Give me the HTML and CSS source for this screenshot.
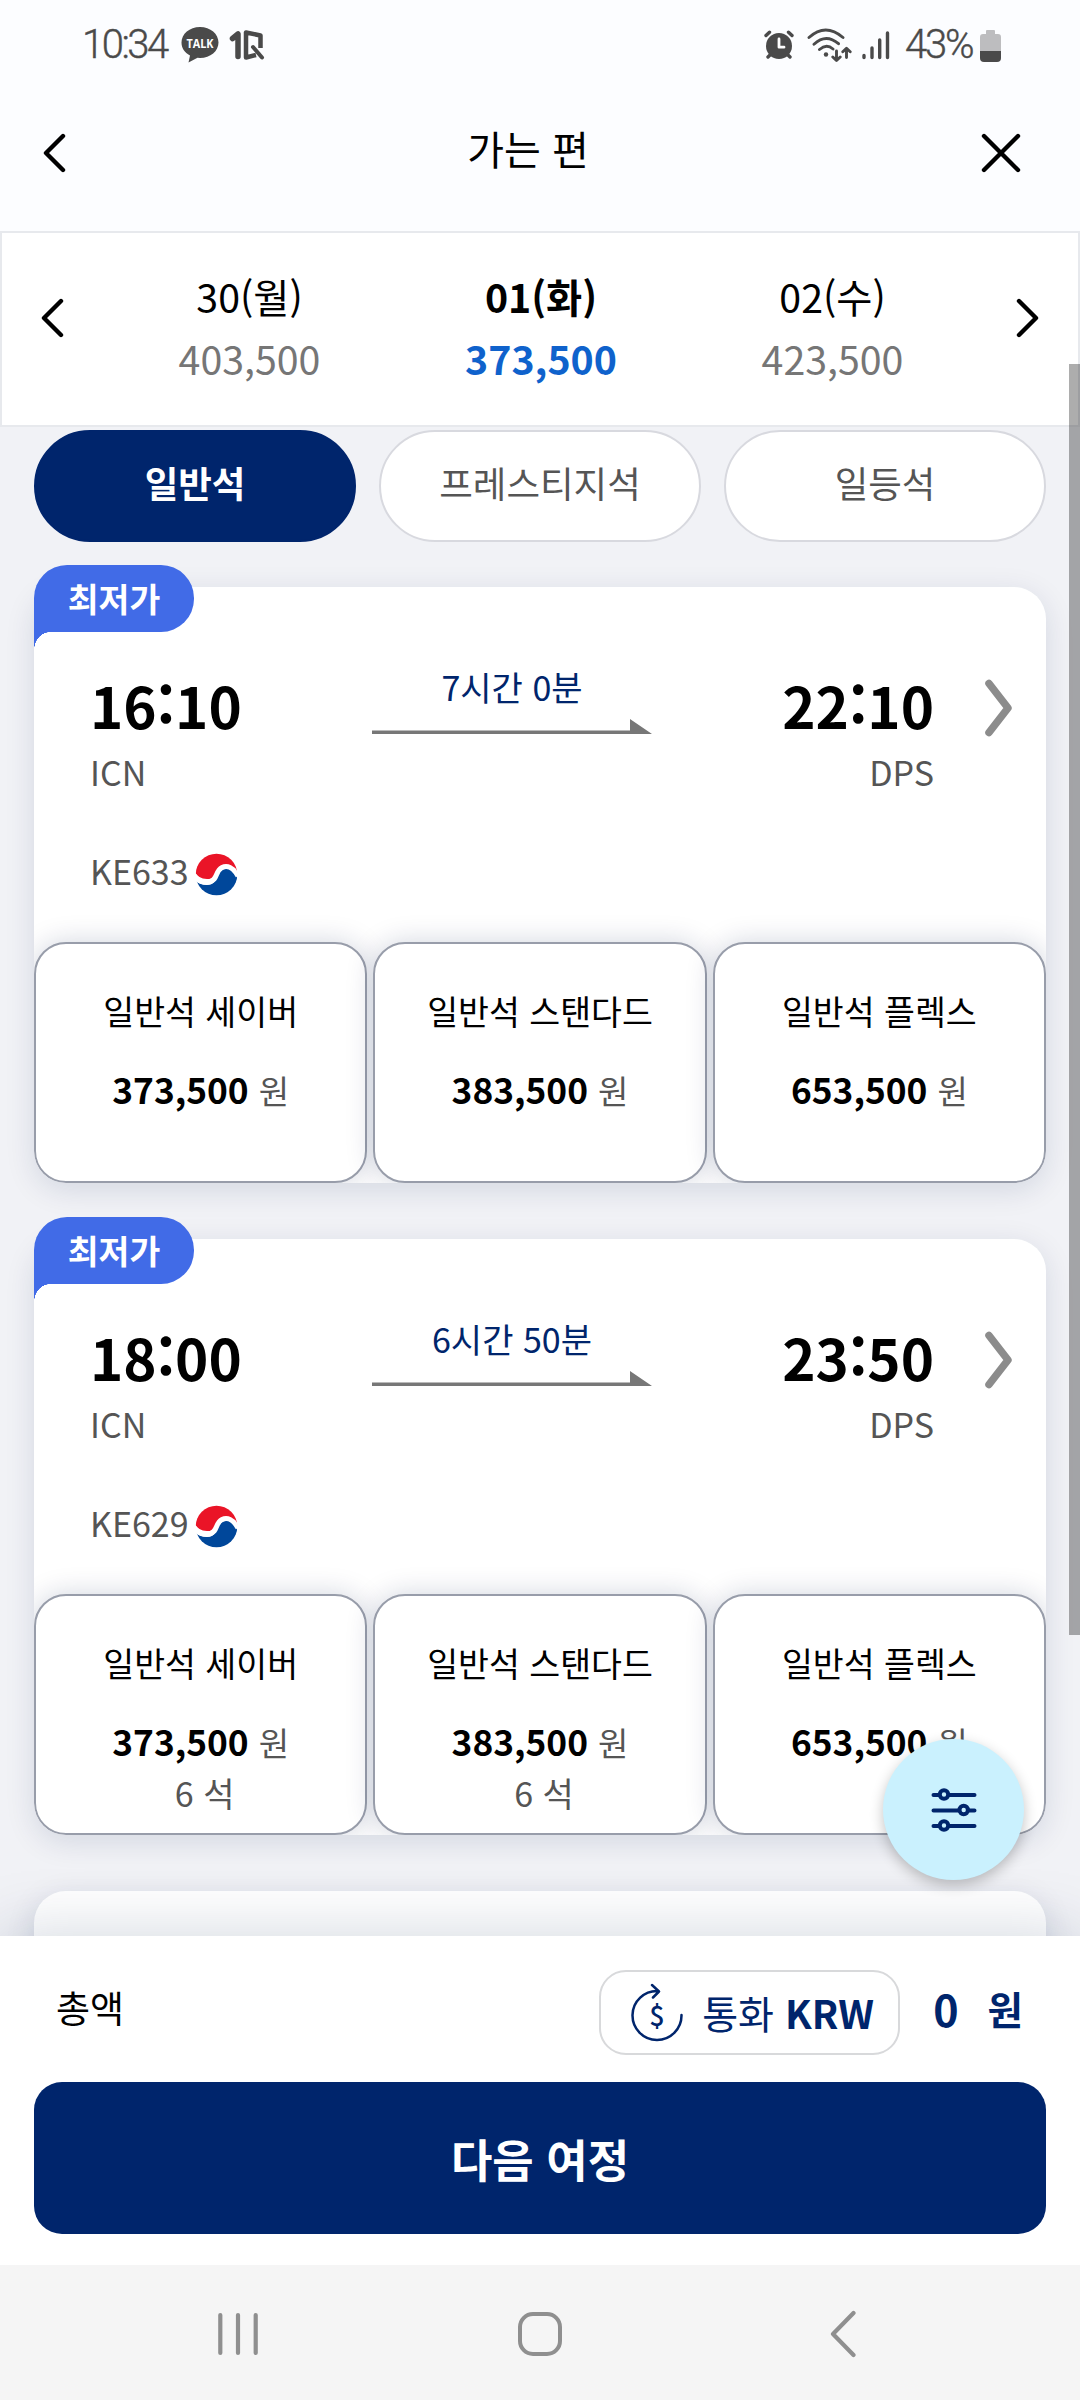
FILE: index.html
```html
<!DOCTYPE html>
<html lang="ko">
<head>
<meta charset="utf-8">
<title>가는 편</title>
<link rel="stylesheet" href="styles.css">
</head>
<body>
<svg class="defs" width="0" height="0">
  <defs>
    <clipPath id="ball"><circle cx="22.5" cy="22.5" r="20.8"/></clipPath>
    <symbol id="airline" viewBox="0 0 45 45">
      <g clip-path="url(#ball)">
        <path fill="#ea1427" d="M0 0H45V23C42 15 34 13 28 16C21 20 22 28 13 27C7 27 3 24 1 20Z"/>
        <path fill="#00479a" d="M45 45H0V27C3 31 8 33 13 33C25 33 21 19 31 17C38 16 43 21 43 26L45 30Z"/>
        <path fill="none" stroke="#fff" stroke-width="5" d="M-1 22C4 30 10 31 15 30C24 28 21 19 28 15.500C33 13 39 15 44 24"/>
      </g>
    </symbol>
    <symbol id="arrow" viewBox="0 0 280 16"><path fill="#777" d="M0 11.5H258V0L280 15H0Z"/></symbol>
    <symbol id="more" viewBox="0 0 28 58"><path fill="none" stroke="#8c8c8c" stroke-width="7.5" stroke-linecap="round" stroke-linejoin="round" d="M4 4.500L23 29L4 53.500"/></symbol>
    <symbol id="left" viewBox="0 0 24 40"><path fill="none" stroke="#000" stroke-width="4.400" stroke-linecap="round" stroke-linejoin="round" d="M21 3L4 20L21 37"/></symbol>
  </defs>
</svg>

<header class="status">
  <div class="status-side">
    <span class="clock">10:34</span>
    <svg class="talk" width="38" height="36" viewBox="0 0 38 36"><path fill="#4a4a4a" d="M19 0C29.500 0 37.500 7 37.500 15.500S29.500 31 19 31L16.500 30.800L7.500 35.500L9 28.500C3.500 25.500 .5 21 .5 15.500C.5 7 8.500 0 19 0Z"/><text x="19" y="20.500" text-anchor="middle" textLength="27" lengthAdjust="spacingAndGlyphs" class="talk-text">TALK</text></svg>
    <svg class="oneq" width="36" height="32" viewBox="0 0 36 32"><g fill="none" stroke="#4a4a4a" stroke-linejoin="round"><path stroke-width="5.500" stroke-linecap="round" d="M3.500 9.500L9 5V27.500"/><path stroke-width="4.500" d="M31.500 19V6.500L17 3.500V28.500L27 26"/><path stroke-width="4" stroke-linecap="round" d="M24 18L33 28.500"/></g></svg>
  </div>
  <div class="status-side">
    <svg class="alarm" width="30" height="30" viewBox="0 0 30 30"><g stroke="#4a4a4a" stroke-width="3.400" stroke-linecap="round"><path d="M2 5.500L5.500 2.200M28 5.500L24.500 2.200M4 27L8 23M26 27L22 23"/></g><circle cx="15" cy="16" r="13" fill="#4a4a4a"/><path fill="none" stroke="#fff" stroke-width="2.800" stroke-linecap="round" stroke-linejoin="round" d="M15 9V17.200H20"/></svg>
    <svg class="wifi" width="46" height="35" viewBox="0 0 46 35"><g fill="none" stroke="#4a4a4a" stroke-width="2.900" stroke-linecap="round" stroke-linejoin="round"><path d="M2 9.500Q18.500-5.500 36 9.500M7 16.200Q19 5 31.500 15.700M12.500 21.500Q19.500 15.500 26 21M29.500 23V32M25.800 29L29.500 32.500L33.200 29M39.500 29.500V21M35.800 23.800L39.500 20.300L43.200 23.800"/></g><circle cx="19" cy="26.500" r="2.200" fill="#4a4a4a"/></svg>
    <svg class="bars" width="28" height="30" viewBox="0 0 28 30"><path fill="none" stroke="#4a4a4a" stroke-width="3.400" stroke-linecap="round" d="M2 25.500V27.500M10 18V27.500M17.700 10V27.500M25.500 3V27.500"/></svg>
    <span class="percent">43%</span>
    <svg class="battery" width="21" height="33" viewBox="0 0 21 33"><path fill="#bdbdbf" d="M6 2Q6 1 7 1H14Q15 1 15 2V5H18Q21 5 21 8V22H0V8Q0 5 3 5H6Z"/><path fill="#4a4a4a" d="M0 22H21V29Q21 33 17 33H4Q0 33 0 29Z"/></svg>
  </div>
</header>

<nav class="titlebar">
  <svg class="back" width="24" height="40"><use href="#left"/></svg>
  <h1 class="title">가는 편</h1>
  <svg class="close" width="40" height="40" viewBox="0 0 40 40"><path fill="none" stroke="#000" stroke-width="4.400" stroke-linecap="round" d="M3 3L37 37M37 3L3 37"/></svg>
</nav>

<section class="dates">
  <svg class="date-arrow" width="24" height="40"><use href="#left"/></svg>
  <div class="date-list">
    <div class="date"><span>30(월)</span><span class="date-price">403,500</span></div>
    <div class="date date-on"><span>01(화)</span><span class="date-price">373,500</span></div>
    <div class="date"><span>02(수)</span><span class="date-price">423,500</span></div>
  </div>
  <svg class="date-arrow flip" width="24" height="40"><use href="#left"/></svg>
</section>

<main class="results">
  <div class="tabs">
    <div class="tab tab-on">일반석</div>
    <div class="tab">프레스티지석</div>
    <div class="tab">일등석</div>
  </div>

  <article class="card">
    <div class="badge">최저가</div>
    <div class="flight">
      <div class="route">
        <div class="stop"><span class="time">16<i class="colon">:</i>10</span><span class="code">ICN</span></div>
        <div class="leg"><span class="duration">7시간 0분</span><svg width="280" height="16"><use href="#arrow"/></svg></div>
        <div class="stop stop-end"><span class="time">22<i class="colon">:</i>10</span><span class="code">DPS</span></div>
        <svg class="more" width="28" height="58"><use href="#more"/></svg>
      </div>
      <div class="carrier">KE633<svg class="logo" width="45" height="45"><use href="#airline"/></svg></div>
    </div>
    <div class="fares">
      <div class="fare"><span class="fare-name">일반석 세이버</span><span class="fare-price"><b>373,500</b>원</span></div>
      <div class="fare"><span class="fare-name">일반석 스탠다드</span><span class="fare-price"><b>383,500</b>원</span></div>
      <div class="fare"><span class="fare-name">일반석 플렉스</span><span class="fare-price"><b>653,500</b>원</span></div>
    </div>
  </article>

  <article class="card">
    <div class="badge">최저가</div>
    <div class="flight">
      <div class="route">
        <div class="stop"><span class="time">18<i class="colon">:</i>00</span><span class="code">ICN</span></div>
        <div class="leg"><span class="duration">6시간 50분</span><svg width="280" height="16"><use href="#arrow"/></svg></div>
        <div class="stop stop-end"><span class="time">23<i class="colon">:</i>50</span><span class="code">DPS</span></div>
        <svg class="more" width="28" height="58"><use href="#more"/></svg>
      </div>
      <div class="carrier">KE629<svg class="logo" width="45" height="45"><use href="#airline"/></svg></div>
    </div>
    <div class="fares">
      <div class="fare"><span class="fare-name">일반석 세이버</span><span class="fare-price"><b>373,500</b>원</span><span class="seats">6 석</span></div>
      <div class="fare"><span class="fare-name">일반석 스탠다드</span><span class="fare-price"><b>383,500</b>원</span><span class="seats">6 석</span></div>
      <div class="fare"><span class="fare-name">일반석 플렉스</span><span class="fare-price"><b>653,500</b>원</span></div>
    </div>
  </article>

  <article class="card card-next"></article>
</main>

<footer class="total">
  <div class="sum">
    <span class="sum-label">총액</span>
    <div class="currency">
      <svg width="54" height="60" viewBox="0 0 54 60"><g fill="none" stroke="#00256c" stroke-width="2.500" stroke-linecap="round" stroke-linejoin="round"><path d="M28 8A24.500 24.500 0 1 0 51.500 32M22 2L29 8.500L23 14.500"/></g><text x="27" y="42.500" text-anchor="middle" class="dollar">$</text></svg>
      <span>통화 <b>KRW</b></span>
    </div>
    <b class="amount">0</b><b class="unit">원</b>
  </div>
  <div class="next">다음 여정</div>
</footer>

<div class="sysnav">
  <svg width="42" height="46" viewBox="0 0 42 46"><path fill="none" stroke="#8f8f8f" stroke-width="4.200" stroke-linecap="round" d="M3.300 4V42M21 4V42M38.700 4V42"/></svg>
  <svg class="home" width="46" height="46" viewBox="0 0 46 46"><rect x="3" y="3" width="40" height="40" rx="13" fill="none" stroke="#8f8f8f" stroke-width="4"/></svg>
  <svg width="26" height="48" viewBox="0 0 26 48"><path fill="none" stroke="#8f8f8f" stroke-width="4.200" stroke-linecap="round" stroke-linejoin="round" d="M23.500 3L3 24L23.500 45"/></svg>
</div>

<div class="filter"><svg width="46" height="46" viewBox="0 0 46 46"><g stroke="#00256c" stroke-width="4" fill="#caf1fe"><path stroke-linecap="round" d="M2.500 8H43.500M2.500 23.500H43.500M2.500 39H43.500"/><circle cx="13" cy="7.500" r="4.200"/><circle cx="32.700" cy="23" r="4.200"/><circle cx="13" cy="38.500" r="4.200"/></g></svg></div>
<div class="scrollbar"></div>
</body>
</html>
```

FILE: styles.css
```css
* { box-sizing: border-box; }
html, body { margin: 0; }
body {
  position: relative;
  width: 1080px;
  height: 2400px;
  overflow: hidden;
  display: flex;
  flex-direction: column;
  background: #f1f2f6;
  color: #000;
  font-family: "Noto Sans CJK KR", "Noto Sans", sans-serif;
}
svg { display: block; flex: none; }
.defs { position: absolute; }

.status {
  height: 90px;
  padding: 0 79px 0 82px;
  display: flex;
  justify-content: space-between;
  background: #fcfdff;
  color: #4a4a4a;
}
.status-side { display: flex; align-items: center; }
.clock, .percent {
  font: 300 40px/88px Roboto, sans-serif;
  white-space: nowrap;
  -webkit-text-stroke: .4px #4a4a4a;
}
.clock { width: 99px; letter-spacing: -2.5px; }
.percent { width: 75px; letter-spacing: -2.2px; }
.talk-text { font: 700 13px "Open Sans", sans-serif; fill: #fff; }
.oneq { margin-left: 10px; }
.wifi { margin-left: 13px; }
.bars { margin: 0 15px 0 9px; }

.titlebar {
  height: 141px;
  padding: 0 59px 15px 42px;
  display: flex;
  align-items: center;
  justify-content: space-between;
  background: #fcfdff;
}
.title { margin: 0 0 10px 9px; font-size: 40px; font-weight: 400; line-height: 60px; }

.dates {
  height: 196px;
  padding: 0 38px 0 38px;
  display: flex;
  align-items: center;
  justify-content: space-between;
  border: 2px solid #e7e9ed;
  background: #fff;
}
.date-arrow { margin-bottom: 22px; }
.flip { transform: scaleX(-1); }
.date-list { display: flex; padding-left: 2px; }
.date {
  width: 291.5px;
  display: flex;
  flex-direction: column;
  align-items: center;
  font-size: 39.300px;
  line-height: 62px;
  padding-bottom: 4px;
}
.date-price { color: #767676; }
.date-on { font-weight: 700; }
.date-on .date-price { color: #0f62cc; }

.results { flex: 1; min-height: 0; overflow: hidden; padding: 3px 34px 0; }
.tabs { display: flex; gap: 23px; }
.tab {
  flex: 1;
  height: 112px;
  border: 2px solid #d8d9df;
  border-radius: 56px;
  background: #fff;
  color: #555;
  font-size: 36.500px;
  line-height: 102px;
  text-align: center;
}
.tab-on { border-color: #00256c; background: #00256c; color: #fff; font-weight: 700; }

.card {
  position: relative;
  height: 596px;
  margin-top: 45px;
  border-radius: 32px;
  background: #fff;
  box-shadow: 0 7px 30px rgba(0, 37, 80, .12);
}
.card + .card { margin-top: 56px; }
.badge {
  position: absolute;
  left: 0;
  top: -22px;
  width: 160px;
  height: 67px;
  border-radius: 33px 33px 33px 0;
  background: #416be7;
  color: #fff;
  font-size: 33.500px;
  font-weight: 700;
  line-height: 66px;
  text-align: center;
}
.badge::after {
  content: "";
  position: absolute;
  left: 0;
  top: 67px;
  width: 16px;
  height: 18px;
  background: radial-gradient(ellipse 16px 18px at 100% 100%, #fff 98%, #416be7 100%);
}
.flight { height: 355px; padding: 80px 33px 0 56px; }
.route { display: flex; height: 179px; }
.stop { width: 160px; display: flex; flex-direction: column; padding-top: 7px; }
.stop-end { align-items: flex-end; margin-left: 122px; }
.time { font-size: 56.500px; font-weight: 700; line-height: 60px; white-space: nowrap; }
.colon { position: relative; top: -2px; font-style: normal; }
.code { margin-top: 13px; font-size: 34px; line-height: 50px; color: #555; }
.leg { width: 280px; margin-left: 122px; display: flex; flex-direction: column; align-items: center; gap: 12px; }
.duration { font-size: 34px; line-height: 40px; color: #00256c; }
.more { margin: 12px 0 0 auto; }
.carrier { height: 50px; display: flex; align-items: center; font-size: 34px; line-height: 50px; color: #555; }
.logo { margin: 6px 0 0 5px; }

.fares {
  display: grid;
  grid-template-columns: repeat(3, 1fr);
  gap: 6px;
  clip-path: inset(-40px 0 0 0 round 0 0 32px 32px);
}
.fare {
  height: 241px;
  padding-top: 47px;
  display: flex;
  flex-direction: column;
  align-items: center;
  border: 2px solid #989daa;
  border-radius: 32px;
  background: #fff;
  box-shadow: 0 0 28px rgba(0, 25, 80, .18);
}
.fare-name { font-size: 33.600px; line-height: 40px; }
.fare-price { margin-top: 32px; font-size: 33px; line-height: 52px; color: #555; }
.fare-price b { margin-right: 10px; font-size: 35.300px; color: #000; }
.seats { padding-left: 8px; font-size: 34px; line-height: 50px; color: #555; }

.total {
  position: relative;
  height: 329px;
  padding: 34px 34px 0;
  background: #fff;
  box-shadow: 0 -4px 60px rgba(0, 37, 80, .17);
}
.sum { height: 85px; padding: 0 23px 0 22px; display: flex; }
.sum-label { flex: 1; font-size: 37px; line-height: 74px; }
.currency {
  width: 301px;
  height: 85px;
  padding-left: 29px;
  display: flex;
  align-items: center;
  gap: 18px;
  border: 2px solid #d8d9db;
  border-radius: 27px;
  color: #00256c;
  font-size: 39px;
  line-height: 81px;
}
.dollar { font: 500 27px "Noto Sans CJK KR", sans-serif; fill: #00256c; }
.amount { margin-left: 33px; font-size: 43px; line-height: 76px; color: #00256c; }
.unit { margin-left: 29px; font-size: 38.500px; line-height: 76px; color: #00256c; }
.next {
  height: 152px;
  margin-top: 27px;
  border-radius: 28px;
  background: #00256c;
  color: #fff;
  font-size: 45px;
  font-weight: 700;
  line-height: 154px;
  text-align: center;
}

.sysnav {
  position: relative;
  height: 135px;
  padding: 2px 224px 0 217px;
  display: flex;
  align-items: center;
  justify-content: space-between;
  background: #f5f5f5;
}
.home { margin-right: 9px; }

.filter {
  position: absolute;
  left: 883px;
  top: 1739px;
  width: 141px;
  height: 141px;
  display: grid;
  place-items: center;
  border-radius: 50%;
  background: #caf1fe;
  box-shadow: 0 5px 14px rgba(0, 0, 0, .24);
}
.scrollbar { position: absolute; right: 0; top: 364px; width: 11px; height: 1271px; background: rgba(0, 0, 0, .32); }
```
